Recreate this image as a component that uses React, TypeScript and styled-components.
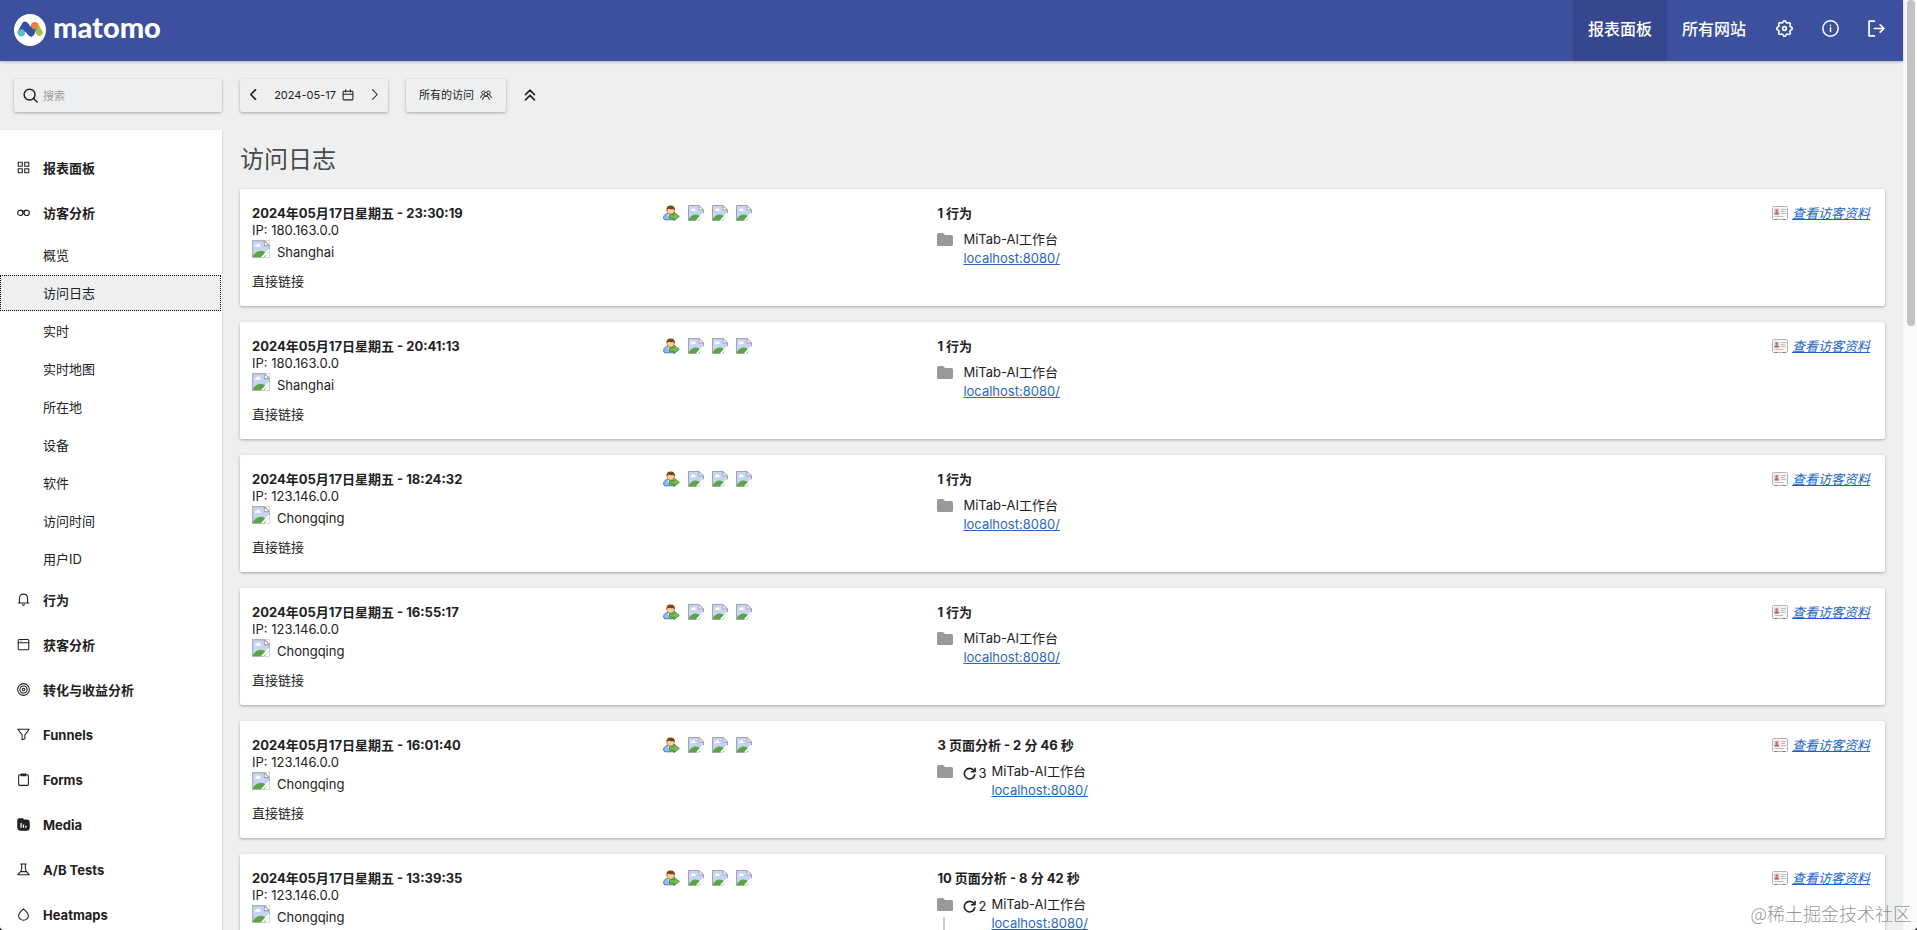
import React from 'react';
import styled, { createGlobalStyle } from 'styled-components';

const sans = `Inter, "Noto Sans CJK SC", sans-serif`;

const GlobalStyle = createGlobalStyle`
  *, *::before, *::after { box-sizing: border-box; }
  html { background: #fafafa; }
  body {
    margin: 0;
    height: 100vh;
    overflow: hidden;
    font-family: ${sans};
    font-size: 13px;
    line-height: 18px;
    color: #212121;
  }
  ul, ol { list-style: none; margin: 0; padding: 0; }
  a { color: inherit; text-decoration: none; }
  button { font: inherit; color: inherit; border: 0; background: none; padding: 0; cursor: pointer; }
  svg { display: block; flex: none; }
`;

const Screen = styled.div`
  position: relative;
  display: flex;
  height: 100vh;
  overflow: hidden;
`;

const Page = styled.div`
  flex: 1;
  min-width: 0;
  background: #edeff0;
`;

const ScrollTrack = styled.div`
  flex: none;
  width: 14px;
  padding: 0 2px 0 4px;
  background: #fafafa;
`;

const ScrollThumb = styled.div`
  height: 35%;
  border-radius: 4px;
  background: #c2c2c2;
`;

const TopBar = styled.header`
  position: relative;
  display: flex;
  justify-content: space-between;
  align-items: stretch;
  height: 61px;
  padding: 0 4px 0 14px;
  background: #3c509d;
  box-shadow: 0 1px 3px rgba(0, 0, 0, 0.25);
  color: #fff;
`;

const Brand = styled.a`
  display: flex;
  align-items: center;
  gap: 7px;
  font: 900 29px/32px Lato, sans-serif;
  padding-bottom: 2px;
`;

const BrandName = styled.span`
  padding-bottom: 6px;
`;

const TopNav = styled.nav`
  display: flex;
`;

const TopLink = styled.a<{ $active?: boolean }>`
  display: flex;
  align-items: center;
  padding: 0 15px 4px;
  font-size: 16px;
  font-weight: 500;
  background: ${(p) => (p.$active ? '#37478f' : 'transparent')};
`;

const TopButton = styled.button`
  display: flex;
  align-items: center;
  justify-content: center;
  width: 46px;
  padding-bottom: 5px;
`;

const Body = styled.div`
  display: flex;
  align-items: flex-start;
  gap: 18px;
`;

const SideColumn = styled.div`
  flex: none;
  width: 222px;
  padding-top: 18px;
`;

const raised = `
  border-radius: 2px;
  box-shadow: 0 1px 3px rgba(0, 0, 0, 0.3);
`;

const SearchBox = styled.label`
  display: flex;
  align-items: center;
  gap: 5px;
  height: 33px;
  margin: 0 0 18px 14px;
  padding: 0 10px 0 9px;
  ${raised}
`;

const SearchInput = styled.input`
  flex: 1;
  min-width: 0;
  border: 0;
  outline: 0;
  padding: 0;
  background: none;
  font: 11px/16px ${sans};
  &::placeholder { color: #9e9e9e; }
`;

const SideNav = styled.nav`
  padding: 16px 0;
  background: #fff;
  box-shadow: 0 1px 2px rgba(0, 0, 0, 0.25);
`;

const MenuLink = styled.a`
  display: flex;
  align-items: center;
  gap: 13px;
  height: 45px;
  padding: 0 0 2px 17px;
  font-weight: 700;
`;

const SubItem = styled.li`
  padding: 1px 1px 1px 0;
`;

const SubLink = styled.a<{ $selected?: boolean }>`
  display: flex;
  align-items: center;
  height: 36px;
  padding-left: 43px;
  background: ${(p) => (p.$selected ? '#edeff0' : 'transparent')};
  outline: ${(p) => (p.$selected ? '1px dotted #000' : 'none')};
  outline-offset: -1px;
`;

const Main = styled.main`
  flex: 1;
  min-width: 0;
  padding: 18px 18px 0 0;
`;

const Controls = styled.div`
  display: flex;
  align-items: center;
  gap: 18px;
  height: 33px;
  font-size: 11px;
`;

const PeriodPicker = styled.div`
  display: flex;
  align-items: center;
  justify-content: space-between;
  width: 148px;
  height: 33px;
  padding: 0 8px 2px;
  ${raised}
`;

const PickerButton = styled.button`
  display: flex;
  align-items: center;
  gap: 6px;
`;

const CollapseButton = styled(PickerButton)`
  padding-bottom: 2px;
`;

const SegmentButton = styled(PickerButton)`
  height: 33px;
  padding: 0 14px 2px 13px;
  ${raised}
`;

const Title = styled.h1`
  margin: 32px 0 13px;
  font-size: 24px;
  line-height: 32px;
  font-weight: 400;
  color: #4a4a4a;
`;

const VisitList = styled.ol`
  display: grid;
  gap: 16px;
`;

const VisitCard = styled.li`
  display: grid;
  grid-template-columns: 3fr 2fr 7fr;
  min-height: 117px;
  border-radius: 2px;
  background: #fff;
  box-shadow: 0 1px 3px rgba(0, 0, 0, 0.3);
`;

const Cell = styled.div`
  padding: 15px 12px 0;
`;

const Strong = styled.strong`
  display: block;
`;

const Line = styled.div`
  line-height: 16px;
`;

const Place = styled.div`
  display: flex;
  gap: 7px;
  padding-top: 2px;
  line-height: 24px;
`;

const Referrer = styled.div`
  padding-top: 8px;
`;

const IconRow = styled.div`
  display: flex;
  gap: 8px;
  padding-top: 1px;
`;

const ActionsCell = styled(Cell)`
  display: flex;
  justify-content: space-between;
  padding-right: 15px;
`;

const Action = styled.div`
  display: flex;
  padding-top: 8px;
  line-height: 19px;
`;

const FolderColumn = styled.div`
  display: flex;
  flex-direction: column;
  gap: 6px;
  width: 26px;
  padding-top: 3px;
`;

const Connector = styled.div`
  width: 2px;
  height: 40px;
  margin-left: 6px;
  background: #ccc;
`;

const Repeat = styled.span`
  display: flex;
  align-items: center;
  gap: 2px;
  width: 28px;
  height: 22px;
`;

const PageLink = styled.a`
  display: block;
  color: #2b66bf;
  text-decoration: underline;
`;

const ProfileLink = styled.a`
  display: flex;
  align-items: center;
  gap: 4px;
  height: 18px;
  color: #1b64c4;
  font-style: italic;
  text-decoration: underline;
`;

const Watermark = styled.div`
  position: absolute;
  right: 6px;
  bottom: 5px;
  font: 300 18px/24px "Noto Sans CJK SC", sans-serif;
  color: rgba(120, 120, 120, 0.8);
`;

const WindowCorner = styled.div<{ $side: 'left' | 'right' }>`
  position: absolute;
  bottom: 0;
  ${(p) => p.$side}: 0;
  width: 5px;
  height: 5px;
  background: radial-gradient(circle at ${(p) => (p.$side === 'left' ? '100%' : '0')} 0, transparent 5px, #111 6px);
`;

const Stroke = ({ size = 14, width = 1.2, box = 16, children }: {
  size?: number; width?: number; box?: number; children: React.ReactNode;
}) => (
  <svg width={size} height={size} viewBox={`0 0 ${box} ${box}`} fill="none" stroke="currentColor"
    strokeWidth={width} strokeLinejoin="round" strokeLinecap="round" aria-hidden="true">{children}</svg>
);

const Logo = () => (
  <svg width="32" height="32" viewBox="0 0 32 32" aria-hidden="true">
    <circle cx="16" cy="16" r="16" fill="#fff" />
    <path d="M7 18 11 11" stroke="#3450a3" strokeWidth="6.5" strokeLinecap="round" />
    <path d="M11.5 11.5 17 19" stroke="#3450a3" strokeWidth="6.8" strokeLinecap="round" />
    <path d="M17 19 21 12" stroke="#3450a3" strokeWidth="6.5" strokeLinecap="round" />
    <path d="M21 11.5 25.5 18.5" stroke="#95c748" strokeWidth="6.5" strokeLinecap="round" />
    <path d="M13.5 16.5 17 19 20 14" stroke="#3450a3" strokeWidth="5" strokeLinecap="round" fill="none" />
    <circle cx="7.3" cy="18.8" r="3.6" fill="#5bbfd0" />
    <circle cx="20.8" cy="11.6" r="3.7" fill="#ef7f3b" />
  </svg>
);

const gear = (() => {
  const pts: string[] = [];
  for (let i = 0; i < 64; i++) {
    const a = (i / 64) * Math.PI * 2;
    const r = 6.5 + 0.8 * Math.tanh(2 * Math.cos(a * 8));
    pts.push(`${(8 + r * Math.sin(a)).toFixed(2)} ${(8 - r * Math.cos(a)).toFixed(2)}`);
  }
  return `M${pts.join('L')}Z`;
})();

const GearIcon = () => <Stroke size={17} width={1.5}><path d={gear} /><circle cx="8" cy="8" r="1.8" /></Stroke>;
const InfoIcon = () => <Stroke size={17} width={1.4}><circle cx="8" cy="8" r="7.2" /><path d="M8 7.4v3.4M8 5v.2" /></Stroke>;
const ExitIcon = () => <Stroke size={17} width={1.6}><path d="M6 1H1v14h5M6 8h9M11.5 4.5 15 8l-3.500 3.500" /></Stroke>;

const menuIcons: Record<string, React.ReactNode> = {
  grid: <path d="M1.500 1.500h5v5h-5zM9.500 1.500h5v5h-5zM1.500 9.500h5v5h-5zM9.500 9.500h5v5h-5z" />,
  glasses: <><circle cx="4" cy="8.500" r="3.200" /><circle cx="12" cy="8.500" r="3.200" /><path d="M4 5.300h1.600q1.500 0 2.400 1.700 .9-1.700 2.400-1.700H12M7 9.400q1-.9 2 0" /></>,
  bell: <path d="M1.500 12.200h13M3 12.200V7q0-5.600 5-5.600T13 7v5.200M6.800 14.200l1.200 1 1.200-1" />,
  box: <><rect x="1.500" y="1.800" width="13" height="12.600" rx="1.400" /><path d="M1.500 5.800h13M5 3.800h.1" /></>,
  target: <><circle cx="8" cy="8" r="7.200" /><circle cx="8" cy="8" r="4.400" /><circle cx="8" cy="8" r="1.600" /></>,
  funnel: <path d="M1 1.500h14L9.700 8.400v4.800L6.300 14.600V8.400z" />,
  clipboard: <><rect x="2" y="2.200" width="12" height="13" rx="1.200" /><path d="M5 1.400h6v2H5z" fill="currentColor" /></>,
  media: <><path d="M1 3q0-2 2-2h4l1.500 1.500H12q3 0 3 3V12q0 3-3 3H5q-4 0-4-4z" fill="currentColor" /><path d="M5 6v6M8 8v4M11 9.600V12" stroke="#fff" strokeWidth="1.600" strokeLinecap="butt" /></>,
  flask: <path d="M4.600 1.200h6.800M5.800 1.200v6L4.400 10.600 1 14.400h14l-3.400-3.800L10.200 7.200v-6M4.400 10.600h7.200" />,
  drop: <path d="M8 1q6 5.200 6 8.400a6 5.600 0 0 1-12 0Q2 6.200 8 1z" />,
};

const BrokenImage = ({ size = 16 }: { size?: number }) => (
  <svg width={size} height={size} viewBox="0 0 16 16" role="img" aria-label="图片">
    <path d="M.5.500H11L15.500 5v10.500H.5z" fill="#c6d5f5" stroke="#a3a3a3" />
    <path d="M2.600 5.600q0-1.400 1.500-1.400 .5-1.400 2-.9 1.200.4 1 1.500 1 .2.700 1.200H3z" fill="#fff" />
    <path d="M1 15v-1.200q2.500-4 6.500-4.200 3.200 0 4.800 2.200V15z" fill="#5aa546" />
    <path d="M16 9.500 10.500 16H16z" fill="#fff" />
    <path d="m15.600 8.400-6.800 7.200" stroke="#fff" strokeWidth="1.800" />
    <path d="M11 .500V5h4.500z" fill="#fff" stroke="#a3a3a3" />
    {size > 16 && <path d="M.3.300h15.400v15.400H.3z" fill="none" stroke="#bdbdbd" strokeWidth=".6" />}
  </svg>
);

const ReturningVisitor = () => (
  <svg width="17" height="16" viewBox="0 0 17 16" role="img" aria-label="回访者">
    <path d="M.8 14q-.8-4 2.700-5.300h5.500q3 .8 3 3.300l-1 2.800H2z" fill="#8fbdf0" stroke="#2f62a8" strokeWidth=".8" />
    <path d="m4.500 9.300 2.200 3.500 2-3.500z" fill="#fff" />
    <ellipse cx="7.600" cy="5.600" rx="3.700" ry="3.600" fill="#f9cf9f" stroke="#a26329" strokeWidth=".6" />
    <path d="M3.500 5.500Q3 .6 7.600.5q4.800.1 4.300 5.200L10.300 3.900Q7.500 4.500 5.200 3.700z" fill="#7a4516" />
    <path d="M6.500 9.700H11V7.200l5.300 4.200-5.300 4.200V13.200H6.500z" fill="#79bd45" stroke="#3c7d22" strokeWidth=".8" />
  </svg>
);

const ProfileIcon = () => (
  <svg width="16" height="14" viewBox="0 0 16 14" aria-hidden="true">
    <rect x=".5" y=".5" width="15" height="13" rx="1" fill="#f5f5f5" stroke="#b3b3b3" />
    <rect x="2" y="2.500" width="5.500" height="6" fill="#e3d3d3" />
    <circle cx="4.700" cy="4.600" r="1.300" fill="#9b7b6b" />
    <path d="M2.300 8.500q.4-2.300 2.400-2.300t2.500 2.300z" fill="#d24a4a" />
    <path d="M9 3.500h5M9 5.500h4M9 7.500h5M2.500 10.500h9" stroke="#bdbdbd" />
    <path d="M3 13.500h2M11 13.500h2" stroke="#777" />
  </svg>
);

const FolderIcon = () => (
  <svg width="16" height="13" viewBox="0 0 16 13" aria-hidden="true">
    <path d="M0 1.500Q0 0 1.500 0H6l2 2h6.500Q16 2 16 3.500v8q0 1.500-1.500 1.500h-13Q0 13 0 11.500z" fill="#999" />
  </svg>
);

const menu = [
  { icon: 'grid', label: '报表面板' },
  { icon: 'glasses', label: '访客分析', items: ['概览', '访问日志', '实时', '实时地图', '所在地', '设备', '软件', '访问时间', '用户ID'] },
  { icon: 'bell', label: '行为' },
  { icon: 'box', label: '获客分析' },
  { icon: 'target', label: '转化与收益分析' },
  { icon: 'funnel', label: 'Funnels' },
  { icon: 'clipboard', label: 'Forms' },
  { icon: 'media', label: 'Media' },
  { icon: 'flask', label: 'A/B Tests' },
  { icon: 'drop', label: 'Heatmaps' },
];

type Visit = { time: string; ip: string; city: string; summary: string; repeat?: number; more?: boolean };

const visits: Visit[] = [
  { time: '23:30:19', ip: '180.163.0.0', city: 'Shanghai', summary: '1 行为' },
  { time: '20:41:13', ip: '180.163.0.0', city: 'Shanghai', summary: '1 行为' },
  { time: '18:24:32', ip: '123.146.0.0', city: 'Chongqing', summary: '1 行为' },
  { time: '16:55:17', ip: '123.146.0.0', city: 'Chongqing', summary: '1 行为' },
  { time: '16:01:40', ip: '123.146.0.0', city: 'Chongqing', summary: '3 页面分析 - 2 分 46 秒', repeat: 3 },
  { time: '13:39:35', ip: '123.146.0.0', city: 'Chongqing', summary: '10 页面分析 - 8 分 42 秒', repeat: 2, more: true },
];

const VisitRow = ({ visit }: { visit: Visit }) => (
  <VisitCard>
    <Cell>
      <Strong>2024年05月17日星期五 - {visit.time}</Strong>
      <Line>IP: {visit.ip}</Line>
      <Place><BrokenImage size={18} />{visit.city}</Place>
      <Referrer>直接链接</Referrer>
    </Cell>
    <Cell>
      <IconRow><ReturningVisitor /><BrokenImage /><BrokenImage /><BrokenImage /></IconRow>
    </Cell>
    <ActionsCell>
      <div>
        <Strong>{visit.summary}</Strong>
        <Action>
          <FolderColumn><FolderIcon />{visit.more && <Connector />}</FolderColumn>
          {visit.repeat && (
            <Repeat>
              <Stroke size={13} width={2}><path d="M13.500 4.500A6.500 6.500 0 1 0 14.500 9.500M14.800 1.500v4.300h-4.300" /></Stroke>
              {visit.repeat}
            </Repeat>
          )}
          <div>MiTab-AI工作台<PageLink href="#page">localhost:8080/</PageLink></div>
        </Action>
      </div>
      <ProfileLink href="#profile"><ProfileIcon />查看访客资料</ProfileLink>
    </ActionsCell>
  </VisitCard>
);

export default function App() {
  return (
    <Screen>
      <GlobalStyle />
      <Page>
        <TopBar>
          <Brand href="#home"><Logo /><BrandName>matomo</BrandName></Brand>
          <TopNav>
            <TopLink href="#dashboard" $active>报表面板</TopLink>
            <TopLink href="#sites">所有网站</TopLink>
            <TopButton aria-label="设置"><GearIcon /></TopButton>
            <TopButton aria-label="帮助"><InfoIcon /></TopButton>
            <TopButton aria-label="退出"><ExitIcon /></TopButton>
          </TopNav>
        </TopBar>
        <Body>
          <SideColumn>
            <SearchBox>
              <Stroke size={15} width={1.6}><circle cx="7" cy="7" r="5.800" /><path d="m11.300 11.300 3.700 3.700" /></Stroke>
              <SearchInput type="text" placeholder="搜索" aria-label="搜索" />
            </SearchBox>
            <SideNav>
              <ul>
                {menu.map((m) => (
                  <li key={m.label}>
                    <MenuLink href="#menu"><Stroke size={13} width={1.3}>{menuIcons[m.icon]}</Stroke>{m.label}</MenuLink>
                    {m.items && (
                      <ul>
                        {m.items.map((s) => (
                          <SubItem key={s}><SubLink href="#report" $selected={s === '访问日志'}>{s}</SubLink></SubItem>
                        ))}
                      </ul>
                    )}
                  </li>
                ))}
              </ul>
            </SideNav>
          </SideColumn>
          <Main>
            <Controls>
              <PeriodPicker>
                <PickerButton aria-label="前一天"><Stroke size={11} width={2.4}><path d="M11 1 4 8l7 7" /></Stroke></PickerButton>
                <PickerButton>2024-05-17
                  <Stroke size={12} width={1.4}><rect x="1.500" y="3" width="13" height="11.500" rx="1" /><path d="M1.500 7h13M4.800 1v3M11.200 1v3" /></Stroke>
                </PickerButton>
                <PickerButton aria-label="后一天"><Stroke size={11} width={1.5}><path d="m5 1 7 7-7 7" /></Stroke></PickerButton>
              </PeriodPicker>
              <SegmentButton>所有的访问
                <Stroke size={12} width={1.3}>
                  <circle cx="8" cy="6.800" r="2.500" /><path d="M3.500 14q0-4.500 4.500-4.500t4.500 4.500M4.500 7.500A2.500 2.500 0 1 1 6.500 3.200M11.500 7.500a2.500 2.500 0 1 0-2-4.300M.8 11.500Q1 8.500 3.500 7.800M15.200 11.500q-.2-3-2.700-3.700" />
                </Stroke>
              </SegmentButton>
              <CollapseButton aria-label="收起"><Stroke size={12} width={2}><path d="m2 7.500 6-6 6 6M2 14.500l6-6 6 6" /></Stroke></CollapseButton>
            </Controls>
            <Title>访问日志</Title>
            <VisitList>
              {visits.map((v) => <VisitRow key={v.time} visit={v} />)}
            </VisitList>
          </Main>
        </Body>
      </Page>
      <ScrollTrack><ScrollThumb /></ScrollTrack>
      <Watermark>@稀土掘金技术社区</Watermark>
      <WindowCorner $side="left" />
      <WindowCorner $side="right" />
    </Screen>
  );
}
